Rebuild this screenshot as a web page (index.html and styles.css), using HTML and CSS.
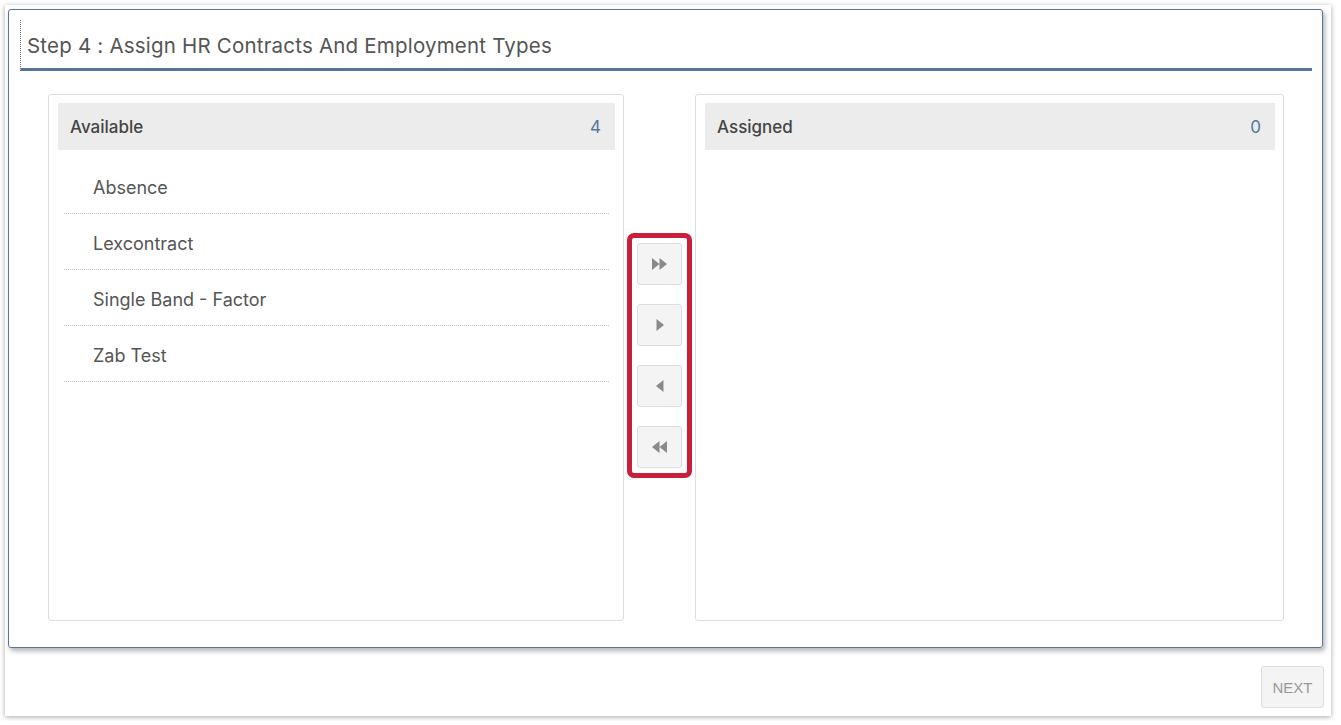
FILE: index.html
```html
<!DOCTYPE html>
<html lang="en">
<head>
    <meta charset="UTF-8">
    <title>Step 4 : Assign HR Contracts And Employment Types</title>
    <link rel="stylesheet" href="styles.css">
</head>
<body>
    <div class="frame">
        <div class="panel">
            <div class="panel-header">
                <h2>Step 4 : Assign HR Contracts And Employment Types</h2>
            </div>

            <div class="picker">
                <div class="list-box available">
                    <div class="list-head">
                        <span>Available</span>
                        <span class="count">4</span>
                    </div>
                    <ul class="items">
                        <li>Absence</li>
                        <li>Lexcontract</li>
                        <li>Single Band - Factor</li>
                        <li>Zab Test</li>
                    </ul>
                </div>

                <div class="mover">
                    <div class="mover-frame">
                        <button type="button" title="Assign all">
                            <svg width="15" height="12" viewBox="0 0 15 12"><path d="M0 0L7.5 6L0 12Z M7.5 0L15 6L7.5 12Z" fill="#8a8a8a"/></svg>
                        </button>
                        <button type="button" title="Assign">
                            <svg width="8" height="12" viewBox="0 0 8 12"><path d="M0.5 0L8 6L0.5 12Z" fill="#8a8a8a"/></svg>
                        </button>
                        <button type="button" title="Remove">
                            <svg width="8" height="12" viewBox="0 0 8 12"><path d="M7.5 0L0 6L7.5 12Z" fill="#8a8a8a"/></svg>
                        </button>
                        <button type="button" title="Remove all">
                            <svg width="15" height="12" viewBox="0 0 15 12"><path d="M7.5 0L0 6L7.5 12Z M15 0L7.5 6L15 12Z" fill="#8a8a8a"/></svg>
                        </button>
                    </div>
                </div>

                <div class="list-box assigned">
                    <div class="list-head">
                        <span>Assigned</span>
                        <span class="count">0</span>
                    </div>
                    <ul class="items"></ul>
                </div>
            </div>
        </div>

        <div class="footer">
            <button type="button" class="next">NEXT</button>
        </div>
    </div>
</body>
</html>
```

FILE: styles.css
```css
body {
    margin: 0;
    padding: 5px;
    background-color: #fff;
    font-family: Inter, "Noto Sans", Arial, sans-serif;
    color: #555;
}

.frame {
    width: 1326px;
    height: 711px;
    box-sizing: border-box;
    background-color: #fff;
    box-shadow: 0 1px 5px rgba(0, 0, 0, 0.35);
    padding: 4px 0 0 3px;
    display: flex;
    flex-direction: column;
}

.panel {
    width: 1315px;
    height: 639px;
    box-sizing: border-box;
    border: 1px solid #5a7498;
    border-radius: 3px;
    box-shadow: 2px 3px 5px rgba(0, 0, 0, 0.3);
    padding: 10px 10px 0 11px;
}

.panel-header {
    border-left: 1px dotted #777;
    border-bottom: 3px solid #587398;
    height: 48px;
    padding-left: 6px;
    display: flex;
    align-items: center;
}

.panel-header h2 {
    margin: 0;
    font-size: 20.5px;
    font-weight: 400;
    letter-spacing: 0.2px;
    color: #555;
    padding-top: 2px;
}

.picker {
    display: flex;
    margin: 23px 0 0 28px;
}

.list-box {
    height: 527px;
    box-sizing: border-box;
    border: 1px solid #ddd;
    border-radius: 3px;
    padding: 8px 8px 0 9px;
}

.available {
    width: 576px;
}

.assigned {
    width: 589px;
}

.list-head {
    height: 47px;
    background-color: #ececec;
    display: flex;
    align-items: center;
    justify-content: space-between;
    padding: 0 14px 0 12px;
    font-size: 17px;
    font-weight: 500;
    color: #444;
}

.count {
    font-weight: 400;
    color: #5577a0;
}

.items {
    list-style: none;
    margin: 8px 6px 0;
    padding: 0;
}

.items li {
    padding: 19px 29px 14px;
    font-size: 18px;
    line-height: 22px;
    border-bottom: 1px dotted #ccc;
    color: #555;
}

.mover {
    width: 71px;
    padding: 139px 0 0 3px;
    box-sizing: border-box;
}

.mover-frame {
    width: 65px;
    box-sizing: border-box;
    border: 5px solid #c8203a;
    border-radius: 7px;
    padding: 5px 0 5px 5px;
    display: flex;
    flex-direction: column;
    gap: 19px;
}

.mover-frame button {
    width: 45px;
    height: 42px;
    background-color: #f4f4f4;
    border: 1px solid #ddd;
    border-radius: 3px;
    padding: 0;
    display: flex;
    align-items: center;
    justify-content: center;
    cursor: pointer;
}

.footer {
    display: flex;
    justify-content: flex-end;
    padding: 18px 7px 0 0;
}

.next {
    width: 63px;
    height: 42px;
    background-color: #f4f4f4;
    border: 1px solid #ddd;
    border-radius: 3px;
    color: #999;
    font-family: "Liberation Sans", Arial, sans-serif;
    font-size: 15px;
}
```
